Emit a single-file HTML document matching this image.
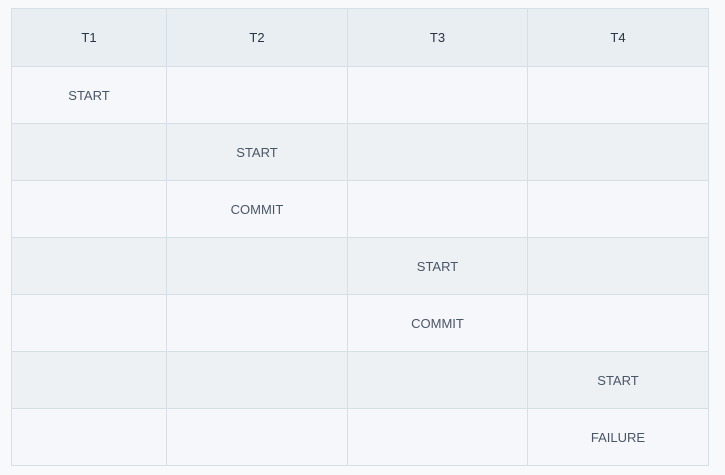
<!DOCTYPE html>
<html><head><style>
html,body{margin:0;padding:0;background:#f8f9fb;width:725px;height:475px;overflow:hidden}
table{position:absolute;left:11px;top:8px;border-collapse:collapse;font-family:"Liberation Sans",sans-serif;font-size:13px;color:#4a5566}
td,th{border:1px solid #d6dfe6;text-align:center;padding:0}
th{height:57px;background:#e9eef2;font-weight:normal;color:#2a3342}
td{height:56px}
tr.a td{background:#f5f7fa}
tr.b td{background:#edf1f4}
</style></head><body>
<table>
<colgroup><col style="width:155px"><col style="width:181px"><col style="width:180px"><col style="width:181px"></colgroup>
<tr><th>T1</th><th>T2</th><th>T3</th><th>T4</th></tr>
<tr class="a"><td>START</td><td></td><td></td><td></td></tr>
<tr class="b"><td></td><td>START</td><td></td><td></td></tr>
<tr class="a"><td></td><td>COMMIT</td><td></td><td></td></tr>
<tr class="b"><td></td><td></td><td>START</td><td></td></tr>
<tr class="a"><td></td><td></td><td>COMMIT</td><td></td></tr>
<tr class="b"><td></td><td></td><td></td><td>START</td></tr>
<tr class="a"><td></td><td></td><td></td><td>FAILURE</td></tr>
</table>
</body></html>
